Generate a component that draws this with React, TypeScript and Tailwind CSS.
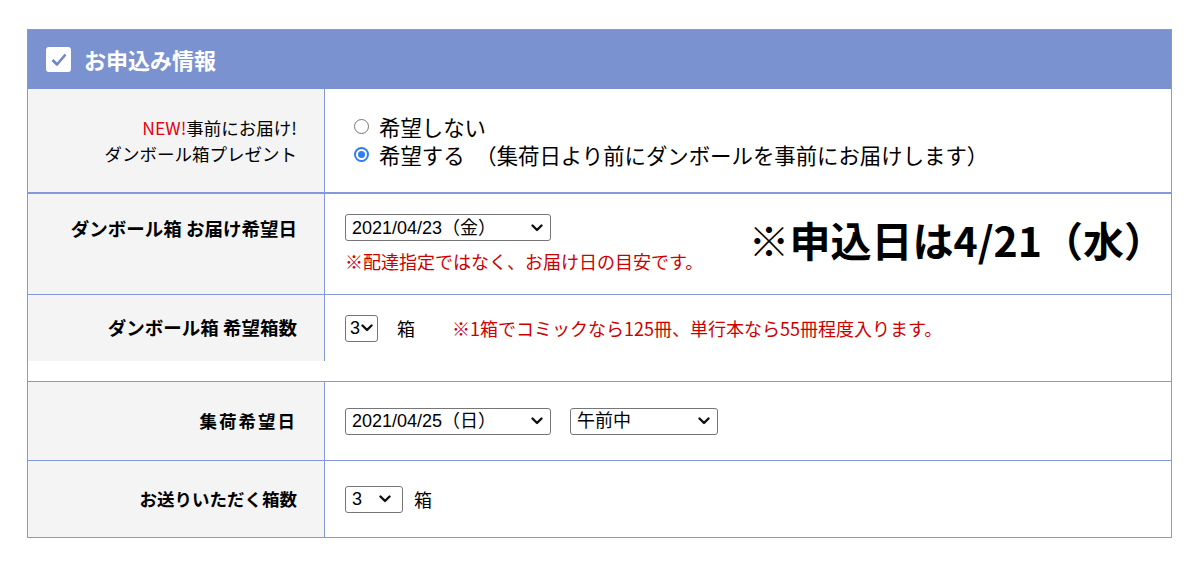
import React from 'react';

const jp = '"Noto Sans CJK JP", "Noto Sans", sans-serif';
const mix = '"Liberation Sans", "Noto Sans CJK JP", sans-serif';

const Chevron = () => (
  <svg width="12" height="8" viewBox="0 0 12 8" className="shrink-0">
    <path d="M1.5 1.5 L6 6 L10.5 1.5" fill="none" stroke="#111" strokeWidth="2.4" strokeLinecap="round" strokeLinejoin="round" />
  </svg>
);

const FakeSelect: React.FC<{ value: string; width: string; pad?: string }> = ({ value, width, pad = 'pl-[6px] pr-[7px]' }) => (
  <div
    className={`inline-flex h-[27px] items-center justify-between rounded-[3px] border border-[#767676] bg-white text-[18px] text-black ${pad} ${width}`}
    style={{ fontFamily: mix }}
  >
    <span className="leading-none">{value}</span>
    <Chevron />
  </div>
);

const Radio: React.FC<{ checked?: boolean }> = ({ checked }) =>
  checked ? (
    <span className="inline-flex h-[15px] w-[15px] shrink-0 items-center justify-center rounded-full bg-[#2f7cf6]">
      <span className="flex h-[11px] w-[11px] items-center justify-center rounded-full bg-white">
        <span className="h-[7px] w-[7px] rounded-full bg-[#2f7cf6]" />
      </span>
    </span>
  ) : (
    <span className="inline-block h-[15px] w-[15px] shrink-0 rounded-full border border-[#767676] bg-white" />
  );

const Label: React.FC<{ children: React.ReactNode; top?: boolean; bold?: boolean; size?: string }> = ({
  children,
  top,
  bold = true,
  size = 'text-[17.5px]',
}) => (
  <div
    className={`flex w-[297px] shrink-0 justify-end border-r border-[#8499da] bg-[#f4f4f4] pr-[27px] text-black ${size} ${bold ? 'font-semibold' : ''} ${top ? 'items-start pt-[21px]' : 'items-center'}`}
    style={{ fontFamily: jp }}
  >
    {children}
  </div>
);

export default function App() {
  return (
    <div className="min-h-[564px] bg-white pl-[27px] pt-[29px]">
      <div className="w-[1145px] border border-[#8499da]">
        {/* header */}
        <div className="flex h-[59px] items-center gap-[13px] bg-[#7b92d1] pl-[18px]">
          <div className="flex h-[25px] w-[25px] items-center justify-center rounded-[3px] bg-white">
            <svg width="18" height="16" viewBox="0 0 18 16">
              <path d="M2.5 8 L7 12.5 L15.5 2.5" fill="none" stroke="#6f86c8" strokeWidth="2.6" strokeLinejoin="round" />
            </svg>
          </div>
          <span className="text-[22px] font-bold text-white" style={{ fontFamily: jp }}>お申込み情報</span>
        </div>

        {/* row 1 */}
        <div className="flex h-[105px] border-b-2 border-[#8499da]">
          <Label bold={false}>
            <div className="text-right leading-[26px]">
              <div><span className="text-[#e60012]">NEW!</span>事前にお届け!</div>
              <div>ダンボール箱プレゼント</div>
            </div>
          </Label>
          <div className="flex flex-1 flex-col justify-center pl-[29px] text-[21.4px] leading-[28px] text-black" style={{ fontFamily: jp }}>
            <div className="flex items-center gap-[10px]"><Radio />希望しない</div>
            <div className="flex items-center gap-[10px]"><Radio checked />希望する　（集荷日より前にダンボールを事前にお届けします）</div>
          </div>
        </div>

        {/* row 2 */}
        <div className="flex h-[101px] border-b border-[#8499da]">
          <Label top size="text-[18.5px]">ダンボール箱 お届け希望日</Label>
          <div className="flex flex-1 items-start justify-between pl-[20px] pt-[20px]">
            <div className="flex flex-col">
              <FakeSelect value="2021/04/23（金）" width="w-[206px]" />
              <div className="mt-[8px] text-[18px] leading-[24px] text-[#cc0000]" style={{ fontFamily: jp }}>
                ※配達指定ではなく、お届け日の目安です。
              </div>
            </div>
            <div className="mr-[6px] mt-[1px] text-[41px] font-bold leading-[48px] text-black" style={{ fontFamily: jp }}>
              ※申込日は4/21（水）
            </div>
          </div>
        </div>

        {/* row 3 */}
        <div className="flex h-[66px]">
          <Label size="text-[18.5px]">ダンボール箱 希望箱数</Label>
          <div className="flex flex-1 items-center pl-[20px] text-[18px]" style={{ fontFamily: jp }}>
            <FakeSelect value="3" width="w-[33px]" pad="pl-[4px] pr-[4px]" />
            <span className="ml-[19px] text-black">箱</span>
            <span className="ml-[37px] text-[#cc0000]">※1箱でコミックなら125冊、単行本なら55冊程度入ります。</span>
          </div>
        </div>
        <div className="h-[21px] border-b border-[#8499da]" />

        {/* row 4 */}
        <div className="flex h-[79px] border-b border-[#8499da]">
          <Label><span className="tracking-[2px]">集荷希望日</span></Label>
          <div className="flex flex-1 items-center gap-[19px] pl-[20px]">
            <FakeSelect value="2021/04/25（日）" width="w-[206px]" />
            <FakeSelect value="午前中" width="w-[148px]" />
          </div>
        </div>

        {/* row 5 */}
        <div className="flex h-[76px]">
          <Label>お送りいただく箱数</Label>
          <div className="flex flex-1 items-center pl-[20px] text-[18px]" style={{ fontFamily: jp }}>
            <FakeSelect value="3" width="w-[58px]" pad="pl-[6px] pr-[11px]" />
            <span className="ml-[11px] text-black">箱</span>
          </div>
        </div>
      </div>
    </div>
  );
}
